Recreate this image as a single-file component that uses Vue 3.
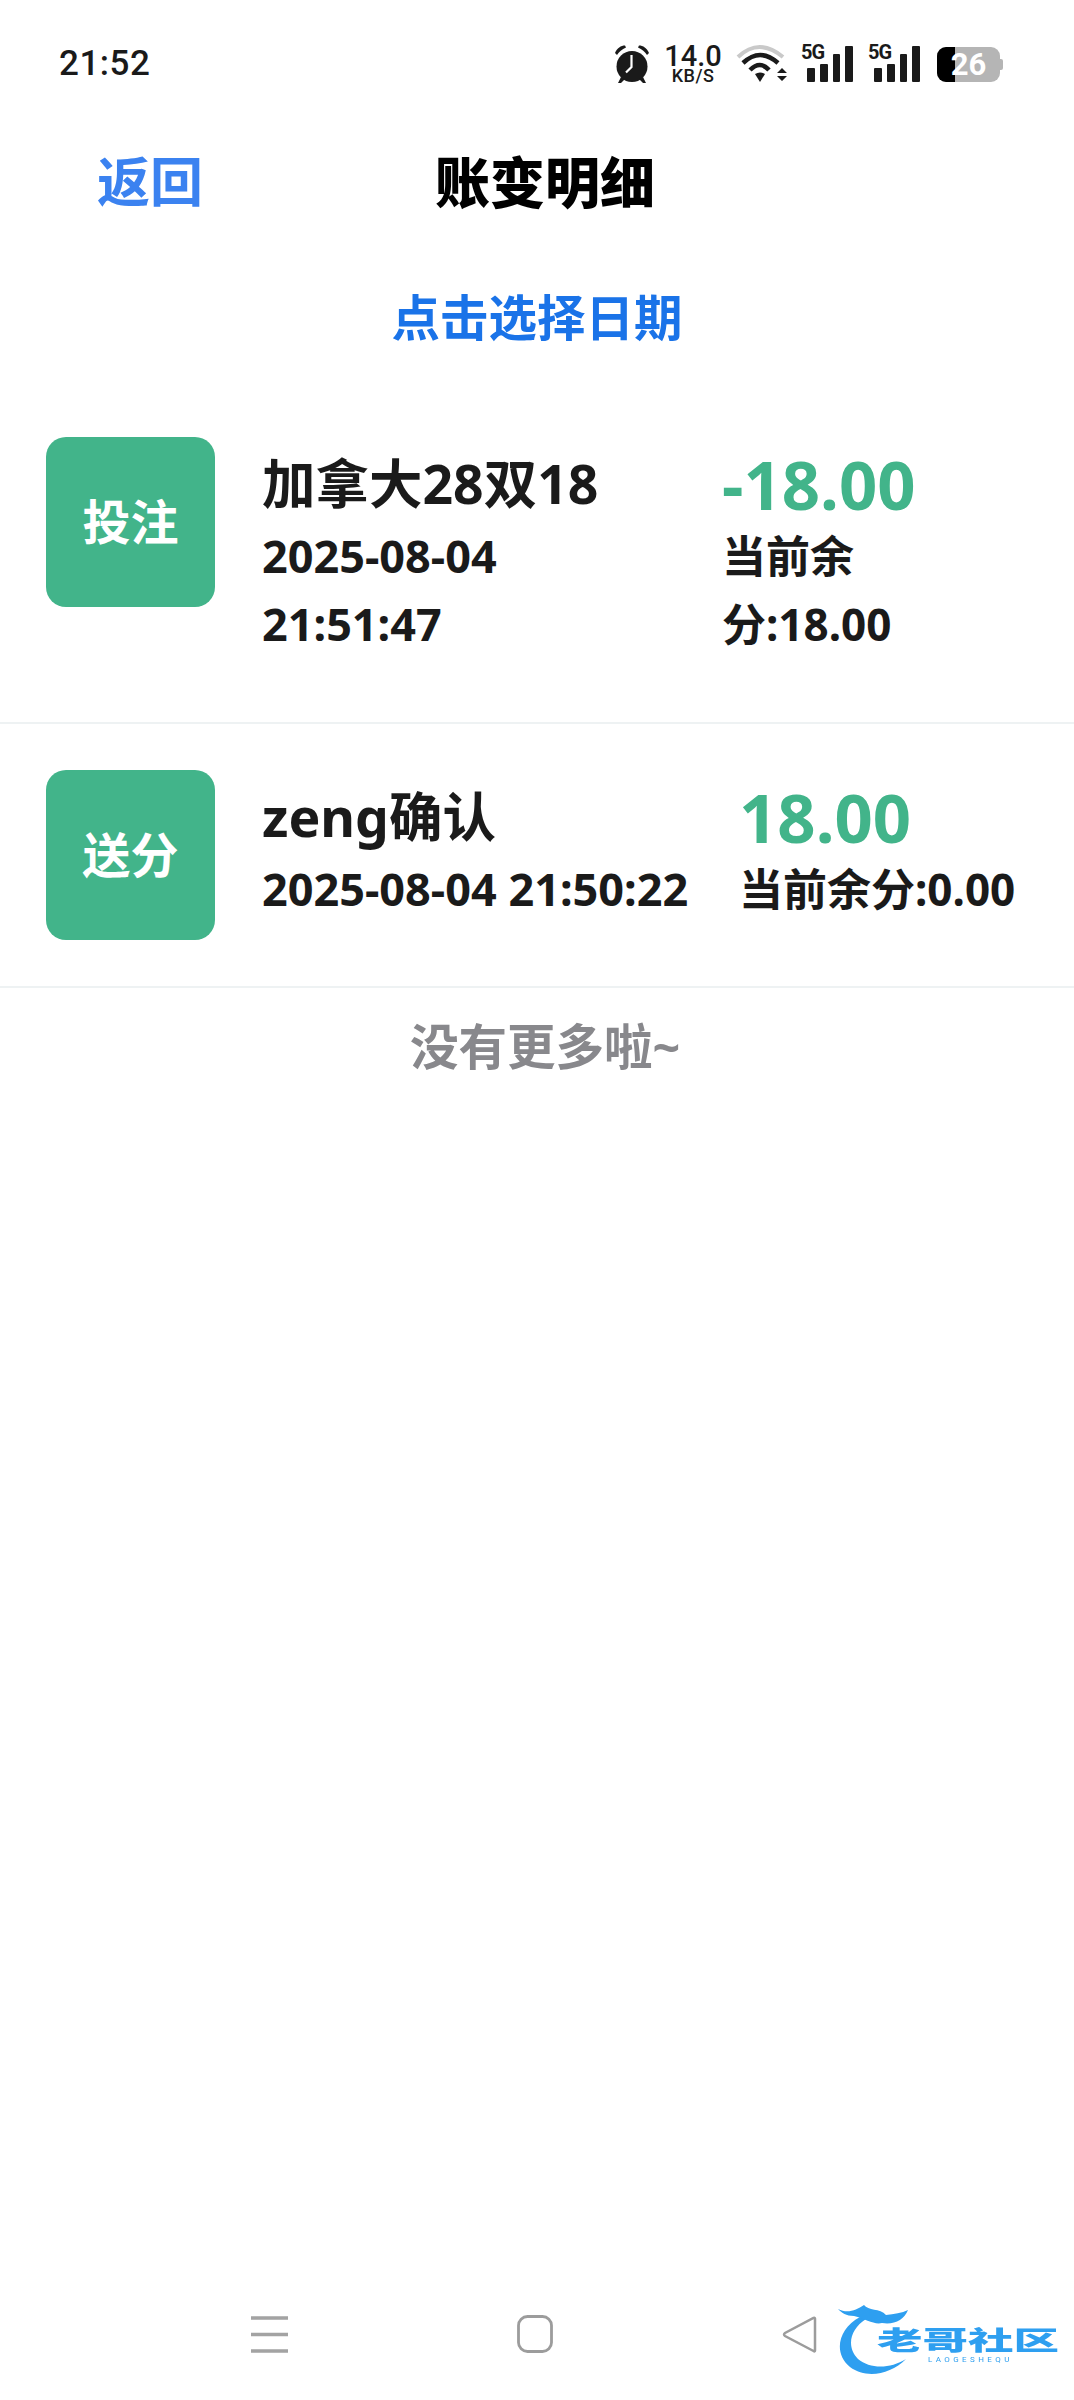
<script setup>
const records = [
  { id: 1, tag: '投注', title: '加拿大28双18', time: '2025-08-04 21:51:47', amount: '-18.00', balance: '当前余分:18.00', narrow: true },
  { id: 2, tag: '送分', title: 'zeng确认', time: '2025-08-04 21:50:22', amount: '18.00', balance: '当前余分:0.00', narrow: false },
]
</script>

<template>
  <div class="page">
    <div class="status-bar">
      <span class="clock">21:52</span>
      <div class="status-icons">
        <svg class="alarm" width="38" height="40" viewBox="0 0 38 40">
          <circle cx="19" cy="22.500" r="15.500" fill="#1a1a1a" />
          <path d="M2 9 C4 4 8 1.500 12 1.500 L13 3.500 C9 5 6 8 4 11 Z" fill="#1a1a1a" />
          <path d="M36 9 C34 4 30 1.500 26 1.500 L25 3.500 C29 5 32 8 34 11 Z" fill="#1a1a1a" />
          <path d="M8 33 L5 39 L8 39 L12 35 Z M30 33 L33 39 L30 39 L26 35 Z" fill="#1a1a1a" />
          <path d="M18.500 11 L18.500 23 L13 28.500" fill="none" stroke="#fff" stroke-width="2.200" />
        </svg>
        <div class="speed">
          <span class="speed-num">14.0</span>
          <span class="speed-unit">KB/S</span>
        </div>
        <svg class="wifi" width="53" height="38" viewBox="0 0 53 38">
          <path d="M3 13 Q24 -7 48 13" fill="none" stroke="#c9c9c9" stroke-width="4" />
          <path d="M8 19 Q25 3 43 19" fill="none" stroke="#1a1a1a" stroke-width="4.500" />
          <path d="M15 26 Q25 16 34 26" fill="none" stroke="#1a1a1a" stroke-width="4.500" />
          <path d="M20 30 Q25 27 30 30 L25 38 Z" fill="#1a1a1a" />
          <path d="M42 29 L47 24 L52 29 Z M42 32 L52 32 L47 37 Z" fill="#1a1a1a" />
        </svg>
        <div v-for="sim in 2" :key="sim" class="signal">
          <span class="net">5G</span>
          <i class="bar b1"></i>
          <i class="bar b2"></i>
          <i class="bar b3"></i>
          <i class="bar b4"></i>
        </div>
        <div class="battery">
          <div class="battery-body">
            <div class="battery-fill"></div>
            <span class="battery-num">26</span>
          </div>
          <i class="battery-cap"></i>
        </div>
      </div>
    </div>

    <header class="nav">
      <span class="back">返回</span>
      <h1 class="nav-title">账变明细</h1>
    </header>

    <div class="date-pick">点击选择日期</div>

    <ul class="list">
      <li v-for="item in records" :key="item.id" class="row" :class="{ tall: item.narrow }">
        <div class="tag">{{ item.tag }}</div>
        <div class="info" :class="{ narrow: item.narrow }">
          <div class="title">{{ item.title }}</div>
          <div class="line">{{ item.time }}</div>
        </div>
        <div class="money" :class="{ narrow: item.narrow }">
          <div class="amount">{{ item.amount }}</div>
          <div class="line balance">{{ item.balance }}</div>
        </div>
      </li>
    </ul>

    <p class="no-more">没有更多啦~</p>

    <footer class="sys-nav">
      <svg width="37" height="37" viewBox="0 0 37 37">
        <path d="M0 2 H37 M0 18.500 H37 M0 35 H37" stroke="#a3a3a3" stroke-width="3.500" />
      </svg>
      <svg width="37" height="38" viewBox="0 0 37 38">
        <rect x="1.500" y="1.500" width="33" height="35" rx="9" fill="none" stroke="#9c9c9c" stroke-width="2.800" />
      </svg>
      <svg width="36" height="37" viewBox="0 0 36 37">
        <path d="M33 2.500 L33 34.500 Q33 36 31.500 35 L3 20 Q1 18.500 3 17 L31.500 2 Q33 1.500 33 2.500 Z" fill="none" stroke="#9c9c9c" stroke-width="2.500" />
      </svg>
      <div class="logo">
        <svg class="dragon" width="90" height="78" viewBox="0 0 90 78">
          <path d="M24 14 C2 26 -3 50 14 64 C30 76 54 72 70 56 C54 66 34 66 22 56 C10 44 14 26 30 16 Z" fill="#2e9ff0" />
          <path d="M2 6 C12 11 20 7 28 2 C32 8 44 5 50 12 C58 11 66 10 72 7 C68 17 58 22 46 20 C38 22 30 16 18 13 C10 13 6 10 2 6 Z" fill="#2e9ff0" />
        </svg>
        <span class="logo-name">老哥社区</span>
        <span class="logo-sub">LAOGESHEQU</span>
      </div>
    </footer>
  </div>
</template>

<style scoped>
.page {
  position: relative;
  display: flex;
  flex-direction: column;
  width: 1074px;
  height: 2400px;
  overflow: hidden;
  background: #fff;
  font-family: "Noto Sans", "Noto Sans CJK SC", sans-serif;
  color: #1a1a1a;
}

/* status bar */
.status-bar {
  display: flex;
  justify-content: space-between;
  align-items: flex-start;
  height: 130px;
  padding: 44px 71px 0 59px;
  box-sizing: border-box;
}

.clock {
  font-family: Roboto, sans-serif;
  font-size: 35px;
  line-height: 40px;
  font-weight: 500;
  letter-spacing: 0.5px;
}

.status-icons {
  display: flex;
  align-items: flex-start;
}

.speed {
  display: flex;
  flex-direction: column;
  align-items: center;
  width: 56px;
  margin: 0 14px 0 14px;
  font-family: Roboto, sans-serif;
  font-weight: 500;
}

.speed-num {
  font-size: 29px;
  line-height: 25px;
}

.speed-unit {
  font-size: 18px;
  line-height: 14px;
  letter-spacing: 0.5px;
}

.wifi {
  margin-right: 13px;
}

.signal {
  position: relative;
  display: flex;
  align-items: flex-end;
  gap: 5px;
  width: 52px;
  height: 38px;
  padding-left: 6px;
  box-sizing: border-box;
  margin-right: 15px;
}

.net {
  position: absolute;
  left: 0;
  top: 0;
  font-family: Roboto, sans-serif;
  font-size: 20px;
  line-height: 17px;
  font-weight: 700;
  letter-spacing: -1px;
}

.bar {
  display: block;
  width: 8px;
  background: #1a1a1a;
  border-radius: 1px;
}

.b1 { height: 14px; }
.b2 { height: 18px; }
.b3 { height: 28px; }
.b4 { height: 36px; }

.battery {
  display: flex;
  align-items: center;
  margin-top: 3px;
  margin-left: 2px;
}

.battery-body {
  position: relative;
  width: 63px;
  height: 35px;
  border-radius: 9px;
  background: #b5b5b5;
  overflow: hidden;
  text-align: center;
}

.battery-fill {
  position: absolute;
  left: 0;
  top: 0;
  bottom: 0;
  width: 18px;
  background: #000;
}

.battery-num {
  position: relative;
  font-family: Roboto, sans-serif;
  font-size: 31px;
  line-height: 35px;
  font-weight: 700;
  color: #fff;
}

.battery-cap {
  width: 3px;
  height: 11px;
  background: #b5b5b5;
  border-radius: 0 2px 2px 0;
}

/* header */
.nav {
  position: relative;
  height: 104px;
  display: flex;
  align-items: center;
  justify-content: center;
}

.back {
  position: absolute;
  left: 97px;
  top: 22px;
  font-size: 53px;
  line-height: 60px;
  font-weight: 700;
  color: #3b82f0;
}

.nav-title {
  margin: 0 0 0 16px;
  font-size: 55px;
  line-height: 60px;
  font-weight: 900;
  color: #000;
}

.date-pick {
  padding: 48px 0 39px;
  text-align: center;
  font-size: 48.500px;
  line-height: 70px;
  font-weight: 700;
  color: #1a73e8;
}

/* records */
.list {
  margin: 0;
  padding: 0;
  list-style: none;
}

.row {
  display: flex;
  padding: 46px 0 46px 46px;
  border-bottom: 2px solid #eef2f3;
}

.row.tall {
  padding-bottom: 49px;
}

.tag {
  flex: none;
  width: 169px;
  height: 170px;
  border-radius: 20px;
  background: #42b48a;
  color: #fff;
  font-size: 48px;
  line-height: 170px;
  font-weight: 700;
  text-align: center;
}

.info {
  flex: none;
  width: 477px;
  margin-left: 47px;
  padding: 13px 0 15px;
}

.info.narrow {
  width: 400px;
  padding-right: 60px;
}

.title {
  margin-bottom: 4px;
  font-size: 53.500px;
  line-height: 68px;
  font-weight: 700;
}

.line {
  font-size: 45px;
  line-height: 68px;
  font-weight: 700;
}

.balance {
  font-size: 44px;
}

.money {
  flex: none;
  width: 300px;
  padding: 13px 0 15px;
}

.money.narrow {
  width: 180px;
}

.amount {
  margin-bottom: 4px;
  font-size: 67px;
  line-height: 68px;
  font-weight: 700;
  color: #42b48a;
}

.no-more {
  margin: 24px 0 0;
  padding-left: 16px;
  text-align: center;
  font-size: 48.500px;
  line-height: 68px;
  font-weight: 700;
  color: #88888c;
}

/* system nav */
.sys-nav {
  position: absolute;
  left: 0;
  right: 0;
  top: 2315px;
  display: flex;
  justify-content: space-between;
  align-items: center;
  padding: 0 256px 0 251px;
}

.logo {
  position: absolute;
  left: 836px;
  top: -12px;
  width: 230px;
  height: 82px;
  color: #2e9ff0;
  filter: blur(0.7px);
}

.dragon {
  position: absolute;
  left: 0;
  top: 0;
}

.logo-name {
  position: absolute;
  left: 41px;
  top: 22px;
  width: 104px;
  font-size: 26px;
  line-height: 30px;
  font-weight: 900;
  white-space: nowrap;
  transform: scaleX(1.75);
  transform-origin: left center;
}

.logo-sub {
  position: absolute;
  left: 92px;
  top: 52px;
  font-family: Roboto, sans-serif;
  font-size: 8px;
  line-height: 10px;
  letter-spacing: 3.4px;
  white-space: nowrap;
}
</style>

<style>
html, body {
  margin: 0;
  background: #fff;
}
</style>
